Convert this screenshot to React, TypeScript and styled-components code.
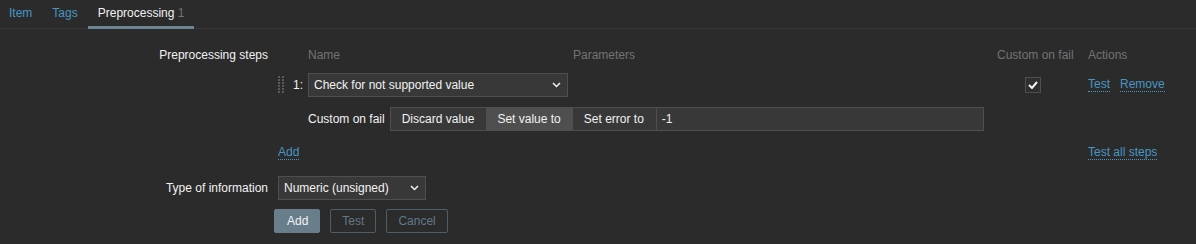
import React from 'react';
import styled, {createGlobalStyle, css} from 'styled-components';

const GlobalStyle = createGlobalStyle`
    body {
        margin: 0;
        background: #2b2b2b;
        color: #f2f2f2;
        font-family: "Liberation Sans", Arial, sans-serif;
        font-size: 12px;
    }
`

type TabType = {title: string, count?: number, active?: boolean}

const tabs: TabType[] = [
    {title: 'Item'},
    {title: 'Tags'},
    {title: 'Preprocessing', count: 1, active: true},
]

const segments = ['Discard value', 'Set value to', 'Set error to']

const Chevron = () => (
    <svg width="9" height="6" viewBox="0 0 9 6">
        <polyline points="1,1 4.5,4.5 8,1" fill="none" stroke="#f2f2f2" strokeWidth="1.5"/>
    </svg>
)

const DragHandle = () => (
    <svg width="8" height="18" viewBox="0 0 8 18">
        {[0, 1, 2, 3, 4, 5].map(r =>
            [0, 4].map(c => <rect key={r + '-' + c} x={c} y={r * 3} width="2" height="2" fill="#5a5a5a"/>)
        )}
    </svg>
)

export default function App() {
    return (
        <>
            <GlobalStyle/>
            <TabList>
                {tabs.map(t =>
                    <Tab key={t.title} active={t.active}>
                        {t.title}
                        {t.count !== undefined && <TabCount> {t.count}</TabCount>}
                    </Tab>
                )}
            </TabList>
            <Form>
                <Label>Preprocessing steps</Label>
                <StepsTable>
                    <span/>
                    <span/>
                    <HeadCell>Name</HeadCell>
                    <HeadCell>Parameters</HeadCell>
                    <HeadCell>Custom on fail</HeadCell>
                    <HeadCell>Actions</HeadCell>

                    <Cell><DragHandle/></Cell>
                    <StepNum>1:</StepNum>
                    <Cell>
                        <Select width={260}>
                            <span>Check for not supported value</span>
                            <Chevron/>
                        </Select>
                    </Cell>
                    <span/>
                    <CheckCell>
                        <CheckBox>
                            <svg width="10" height="8" viewBox="0 0 10 8">
                                <polyline points="1,4 4,7 9,1" fill="none" stroke="#f2f2f2" strokeWidth="2"/>
                            </svg>
                        </CheckBox>
                    </CheckCell>
                    <Actions>
                        <Link>Test</Link>
                        <Link>Remove</Link>
                    </Actions>

                    <span/>
                    <span/>
                    <FailRow>
                        <FailLabel>Custom on fail</FailLabel>
                        <Segmented>
                            {segments.map(s =>
                                <Segment key={s} selected={s === 'Set value to'}>{s}</Segment>
                            )}
                        </Segmented>
                        <TextInput>-1</TextInput>
                    </FailRow>

                    <AddCell><Link>Add</Link></AddCell>
                    <Cell><Link>Test all steps</Link></Cell>
                </StepsTable>

                <Label>Type of information</Label>
                <Field>
                    <Select width={148}>
                        <span>Numeric (unsigned)</span>
                        <Chevron/>
                    </Select>
                </Field>

                <span/>
                <Buttons>
                    <Button primary>Add</Button>
                    <Button>Test</Button>
                    <Button>Cancel</Button>
                </Buttons>
            </Form>
        </>
    );
}

const TabList = styled.div`
    display: flex;
    height: 28px;
    border-bottom: 1px solid #383838;
`

const Tab = styled.div<{active?: boolean}>`
    height: 26px;
    line-height: 26px;
    padding: 0 10px;
    color: ${p => p.active ? '#f2f2f2' : '#4796c4'};
    border-bottom: 3px solid ${p => p.active ? '#6c8593' : 'transparent'};
    margin-bottom: -1px;
    &:first-child {
        padding-left: 9px;
    }
`

const TabCount = styled.span`
    color: #737373;
`

const Form = styled.div`
    display: grid;
    grid-template-columns: 268px 1fr;
    column-gap: 10px;
    padding-top: 14px;
`

const Label = styled.div`
    text-align: right;
    line-height: 24px;
`

const StepsTable = styled.div`
    display: grid;
    grid-template-columns: 12px 18px 265px 424px 91px 1fr;
    grid-template-rows: 30px 34px 34px 24px;
    align-items: start;
    margin-bottom: 11px;
`

const Cell = styled.div`
    display: flex;
    align-items: center;
    height: 24px;
`

const HeadCell = styled(Cell)`
    color: #737373;
`

const StepNum = styled(Cell)`
    padding-left: 3px;
`

const CheckCell = styled(Cell)`
    padding-left: 28px;
`

const Actions = styled(Cell)`
    gap: 10px;
`

const AddCell = styled(Cell)`
    grid-column: 1 / 6;
`

const FailRow = styled.div`
    grid-column: 3 / 5;
    display: flex;
    align-items: center;
    height: 24px;
`

const FailLabel = styled.span`
    margin-right: 5px;
`

const fieldBox = css`
    box-sizing: border-box;
    height: 24px;
    background: #383838;
    border: 1px solid #4f4f4f;
    color: #f2f2f2;
`

const Select = styled.div<{width: number}>`
    ${fieldBox};
    width: ${p => p.width}px;
    display: flex;
    align-items: center;
    justify-content: space-between;
    padding: 0 6px 0 5px;
`

const Segmented = styled.div`
    ${fieldBox};
    display: flex;
`

const Segment = styled.div<{selected?: boolean}>`
    padding: 0 12px 0 11px;
    line-height: 22px;
    background: ${p => p.selected ? '#4f4f4f' : '#383838'};
`

const TextInput = styled.div`
    ${fieldBox};
    border-left: none;
    width: 327px;
    padding: 0 5px;
    line-height: 22px;
`

const CheckBox = styled.div`
    box-sizing: border-box;
    width: 16px;
    height: 16px;
    border: 1px solid #4f4f4f;
    background: #2f2f2f;
    display: flex;
    align-items: center;
    justify-content: center;
`

const Link = styled.span`
    color: #4796c4;
    border-bottom: 1px dotted #4796c4;
    line-height: 13px;
`

const Field = styled.div`
    margin-bottom: 9px;
`

const Buttons = styled.div`
    display: flex;
    gap: 10px;
    margin-left: -4px;
`

const Button = styled.div<{primary?: boolean}>`
    box-sizing: border-box;
    height: 24px;
    line-height: 22px;
    padding: ${p => p.primary ? '0 11px 0 12px' : '0 11px'};
    border: 1px solid ${p => p.primary ? '#687e8b' : '#4d5e68'};
    background: ${p => p.primary ? '#687e8b' : 'transparent'};
    color: ${p => p.primary ? '#f2f2f2' : '#62798a'};
    border-radius: 2px;
`
